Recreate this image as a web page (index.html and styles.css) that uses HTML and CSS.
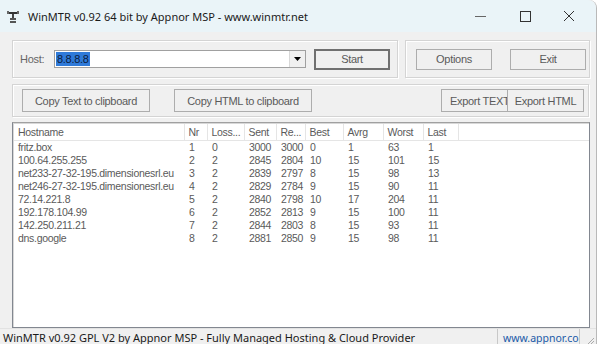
FILE: index.html
```html
<!DOCTYPE html>
<html>
<head>
<meta charset="utf-8">
<link rel="stylesheet" href="styles.css">
</head>
<body>
<div class="window">
  <div class="titlebar">
    <svg class="appicon" width="12" height="12" viewBox="0 0 12 12">
      <rect x="0" y="1" width="12" height="2" fill="#333"/>
      <rect x="0" y="0" width="2" height="3" fill="#666"/>
      <rect x="10" y="0" width="2" height="3" fill="#666"/>
      <rect x="5" y="3" width="2" height="5" fill="#444"/>
      <rect x="3" y="7" width="6" height="2" fill="#555"/>
      <rect x="3" y="10" width="6" height="2" fill="#555"/>
    </svg>
    <span class="title">WinMTR v0.92 64 bit by Appnor MSP - www.winmtr.net</span>
    <div class="wincontrols">
      <svg class="wc" width="44" height="32" viewBox="0 0 44 32"><line x1="16" y1="16.5" x2="27" y2="16.5" stroke="#666" stroke-width="1"/></svg>
      <svg class="wc" width="44" height="32" viewBox="0 0 44 32"><rect x="17.5" y="11.5" width="10" height="10" fill="none" stroke="#333" stroke-width="1"/></svg>
      <svg class="wc" width="44" height="32" viewBox="0 0 44 32"><path d="M17 11 L27 21 M27 11 L17 21" stroke="#333" stroke-width="1"/></svg>
    </div>
  </div>
  <div class="body">
    <div class="row1">
      <div class="group g1">
        <span class="label">Host:</span>
        <div class="combo"><span class="sel">8.8.8.8</span><span class="drop"><svg width="7" height="4" viewBox="0 0 7 4"><path d="M0 0 H7 L3.5 4 Z" fill="#000"/></svg></span></div>
        <button class="btn default">Start</button>
      </div>
      <div class="group g2">
        <button class="btn">Options</button>
        <button class="btn">Exit</button>
      </div>
    </div>
    <div class="group g3">
      <button class="btn copy1">Copy Text to clipboard</button>
      <button class="btn copy2">Copy HTML to clipboard</button>
      <span class="spacer"></span>
      <button class="btn exp1">Export TEXT</button>
      <button class="btn exp2">Export HTML</button>
    </div>
    <div class="list">
      <table>
        <colgroup>
          <col class="c-host"><col class="c-nr"><col class="c-loss"><col class="c-sent"><col class="c-re"><col class="c-best"><col class="c-avrg"><col class="c-worst"><col class="c-last"><col>
        </colgroup>
        <thead>
          <tr><th>Hostname</th><th>Nr</th><th>Loss...</th><th>Sent</th><th>Re...</th><th>Best</th><th>Avrg</th><th>Worst</th><th>Last</th><th class="blank"></th></tr>
        </thead>
        <tbody>
          <tr><td>fritz.box</td><td>1</td><td>0</td><td>3000</td><td>3000</td><td>0</td><td>1</td><td>63</td><td>1</td><td></td></tr>
          <tr><td>100.64.255.255</td><td>2</td><td>2</td><td>2845</td><td>2804</td><td>10</td><td>15</td><td>101</td><td>15</td><td></td></tr>
          <tr><td>net233-27-32-195.dimensionesrl.eu</td><td>3</td><td>2</td><td>2839</td><td>2797</td><td>8</td><td>15</td><td>98</td><td>13</td><td></td></tr>
          <tr><td>net246-27-32-195.dimensionesrl.eu</td><td>4</td><td>2</td><td>2829</td><td>2784</td><td>9</td><td>15</td><td>90</td><td>11</td><td></td></tr>
          <tr><td>72.14.221.8</td><td>5</td><td>2</td><td>2840</td><td>2798</td><td>10</td><td>17</td><td>204</td><td>11</td><td></td></tr>
          <tr><td>192.178.104.99</td><td>6</td><td>2</td><td>2852</td><td>2813</td><td>9</td><td>15</td><td>100</td><td>11</td><td></td></tr>
          <tr><td>142.250.211.21</td><td>7</td><td>2</td><td>2844</td><td>2803</td><td>8</td><td>15</td><td>93</td><td>11</td><td></td></tr>
          <tr><td>dns.google</td><td>8</td><td>2</td><td>2881</td><td>2850</td><td>9</td><td>15</td><td>98</td><td>11</td><td></td></tr>
        </tbody>
      </table>
    </div>
  </div>
  <div class="statusbar">
    <span class="status-text">WinMTR v0.92 GPL V2 by Appnor MSP - Fully Managed Hosting &amp; Cloud Provider</span>
    <span class="status-link">www.appnor.com</span>
    <svg class="grip" width="10" height="10" viewBox="0 0 10 10"><path d="M9 2 L2 9 M9 5 L5 9 M9 8 L8 9" stroke="#aaa" stroke-width="1"/></svg>
  </div>
</div>
</body>
</html>
```

FILE: styles.css
```css
* { box-sizing: border-box; }
html, body { margin: 0; padding: 0; }
body {
  width: 600px;
  height: 344px;
  background: #ffffff;
  overflow: hidden;
  font-family: "Liberation Sans", Arial, sans-serif;
}
.window {
  width: 597px;
  height: 344px;
  background: #f0f0f0;
  border-right: 1px solid #b9b9b9;
  border-top-right-radius: 8px;
  display: flex;
  flex-direction: column;
  position: relative;
}
.titlebar {
  height: 32px;
  background: #eaf4f8;
  border-top-right-radius: 8px;
  display: flex;
  align-items: center;
  padding-left: 7px;
  flex-shrink: 0;
}
.appicon { margin-right: 9px; margin-top: 1px; }
.title {
  font-family: "Noto Sans", "Open Sans", sans-serif;
  font-size: 11px;
  color: #1a1a1a;
  flex: 1;
}
.wincontrols { display: flex; margin-right: 5px; }
.wc { display: block; }
.body {
  flex: 1;
  padding: 8px 6px 0 12px;
  display: flex;
  flex-direction: column;
  font-size: 11px;
  color: #5a5a5a;
}
.row1 { display: flex; gap: 7px; }
.group {
  border: 1px solid #d4d4d4;
  box-shadow: inset 1px 1px 0 #fff, 1px 1px 0 #fff;
  display: flex;
  align-items: center;
}
.g1 { width: 386px; height: 38px; padding-left: 7px; }
.label { width: 34px; color: #666; letter-spacing: -0.3px; }
.combo {
  width: 252px;
  height: 18px;
  background: #fff;
  border: 1px solid #a0a0a0;
  display: flex;
  align-items: center;
  padding-left: 1px;
}
.sel {
  background: #2f7ad9;
  color: #0c1c3c;
  height: 14px;
  line-height: 14px;
  padding: 0 1px;
  letter-spacing: -0.3px;
}
.drop {
  margin-left: auto;
  width: 16px;
  height: 16px;
  background: #f0f0f0;
  border-left: 1px solid #d8d8d8;
  display: flex;
  align-items: center;
  justify-content: center;
}
.btn {
  font-family: "Liberation Sans", Arial, sans-serif;
  font-size: 11px;
  letter-spacing: -0.3px;
  color: #5a5a5a;
  background: #f0f0f0;
  border: 1px solid #adadad;
  height: 21px;
  padding: 0;
  margin: 0;
}
.btn.default { border: 2px solid #707070; width: 76px; margin-left: 8px; }
.g2 { width: 185px; height: 38px; padding-left: 10px; gap: 18px; }
.g2 .btn { width: 76px; }
.g3 {
  margin-top: 6px;
  width: 577px;
  height: 33px;
  padding-left: 9px;
}
.g3 .btn { height: 23px; }
.copy1 { width: 128px; }
.copy2 { width: 138px; margin-left: 24px; }
.spacer { flex: 1; }
.exp1 { width: 67px; white-space: nowrap; overflow: hidden; text-align: left; padding-left: 8px; }
.exp2 { width: 76px; border-left: none; margin-right: 4px; }
.list {
  margin-top: 5px;
  width: 578px;
  height: 206px;
  background: #fff;
  border: 1px solid #828790;
  border-top-color: #a0a0a0;
  box-shadow: inset 1px 1px 0 #d8d8d8;
  padding: 1px 0 0 1px;
  overflow: hidden;
}
table {
  border-collapse: collapse;
  table-layout: fixed;
  width: 100%;
  font-size: 10.5px;
  letter-spacing: -0.3px;
  color: #5a5a5a;
}
.c-host { width: 170px; }
.c-nr { width: 23px; }
.c-loss { width: 37px; }
.c-sent { width: 32px; }
.c-re { width: 29px; }
.c-best { width: 38px; }
.c-avrg { width: 40px; }
.c-worst { width: 40px; }
.c-last { width: 35px; }
th {
  height: 16px;
  font-weight: normal;
  text-align: left;
  padding: 0 0 0 4px;
  border-right: 1px solid #e5e5e5;
  border-bottom: 1px solid #e5e5e5;
  white-space: nowrap;
  overflow: hidden;
  color: #5a5a5a;
}
th.blank { border-right: none; }
td {
  height: 13px;
  line-height: 12px;
  padding: 0 0 0 5px;
  white-space: nowrap;
  overflow: hidden;
}
td:first-child { padding-left: 4px; }
.statusbar {
  height: 18px;
  flex-shrink: 0;
  display: flex;
  align-items: center;
  border-top: 1px solid #e2e2e2;
  background: #f0f0f0;
  position: relative;
}
.status-text {
  font-family: "Noto Sans", "Open Sans", sans-serif;
  font-size: 11px;
  color: #1a1a1a;
  padding-left: 3px;
  width: 497px;
  white-space: nowrap;
  overflow: hidden;
}
.status-link {
  width: 83px;
  height: 17px;
  border-left: 1px solid #c8c8c8;
  border-right: 1px solid #c8c8c8;
  font-family: "Noto Sans", "Open Sans", sans-serif;
  font-size: 10.5px;
  color: #1a5aa8;
  padding-left: 5px;
  line-height: 18px;
  white-space: nowrap;
  overflow: hidden;
}
.grip { margin-left: 5px; margin-top: 6px; }
```
